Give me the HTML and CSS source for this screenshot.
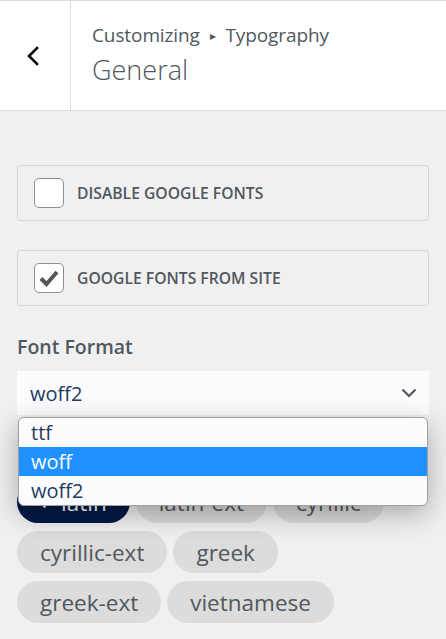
FILE: index.html
```html
<!DOCTYPE html>
<html>
<head>
<meta charset="utf-8">
<link rel="stylesheet" href="styles.css">
</head>
<body>
<header class="header">
  <button class="back" aria-label="Back">
    <svg width="14" height="20" viewBox="0 0 14 20"><path d="M11 2 L3 10 L11 18" fill="none" stroke="#000" stroke-width="2.6" stroke-linecap="square"/></svg>
  </button>
  <div class="titles">
    <div class="crumb">Customizing <span class="tri">&#9656;</span> Typography</div>
    <h1 class="title">General</h1>
  </div>
</header>
<main class="content">
  <label class="check-box">
    <span class="cb"></span>
    <span class="cb-label">DISABLE GOOGLE FONTS</span>
  </label>
  <label class="check-box">
    <span class="cb">
      <svg width="22" height="20" viewBox="0 0 22 20"><path d="M3 10.5 L8.5 16 L19 4" fill="none" stroke="#50575e" stroke-width="4" stroke-linejoin="miter"/></svg>
    </span>
    <span class="cb-label">GOOGLE FONTS FROM SITE</span>
  </label>
  <div class="field">
    <div class="field-label">Font Format</div>
    <div class="select-wrap">
      <div class="select">
        <span>woff2</span>
        <svg width="16" height="10" viewBox="0 0 16 10"><path d="M1.5 1.5 L8 8 L14.5 1.5" fill="none" stroke="#50575e" stroke-width="2.2"/></svg>
      </div>
      <ul class="dropdown">
        <li class="opt">ttf</li>
        <li class="opt active">woff</li>
        <li class="opt">woff2</li>
      </ul>
    </div>
    <div class="pills">
      <span class="pill selected"><svg width="14" height="12" viewBox="0 0 14 12"><path d="M1.5 6 L5.5 10 L12.5 2" fill="none" stroke="#fff" stroke-width="3"/></svg>latin</span>
      <span class="pill">latin-ext</span>
      <span class="pill">cyrillic</span>
      <span class="pill">cyrillic-ext</span>
      <span class="pill">greek</span>
      <span class="pill">greek-ext</span>
      <span class="pill">vietnamese</span>
    </div>
  </div>
</main>
</body>
</html>
```
FILE: styles.css
```css
html, body {
  margin: 0;
  padding: 0;
}
body {
  background: #f0f0f1;
  font-family: "Open Sans", "Noto Sans", sans-serif;
  color: #50575e;
  width: 446px;
  height: 639px;
  overflow: hidden;
}
.header {
  display: flex;
  height: 109px;
  background: #fff;
  border-top: 1px solid #dcdcde;
  border-bottom: 1px solid #dcdcde;
}
.back {
  width: 71px;
  border: 0;
  border-right: 1px solid #dcdcde;
  background: #fff;
  display: flex;
  align-items: center;
  justify-content: center;
  padding: 0 4px 0 0;
  margin: 0;
}
.titles {
  padding: 19px 0 0 21px;
}
.crumb {
  font-size: 19px;
  line-height: 30px;
  color: #50575e;
  letter-spacing: -0.1px;
}
.tri {
  font-size: 12px;
  vertical-align: 2px;
  margin: 0 5px;
}
.title {
  margin: 0;
  font-size: 27px;
  font-weight: 300;
  line-height: 38px;
  color: #50575e;
}
.content {
  padding: 54px 17px 0 17px;
}
.check-box {
  display: flex;
  align-items: center;
  height: 54px;
  border: 1px solid #d6d6d8;
  border-radius: 3px;
  padding-left: 16px;
  margin-bottom: 29px;
}
.cb {
  width: 28px;
  height: 28px;
  border: 1px solid #8c8f94;
  border-radius: 5px;
  background: #fff;
  display: flex;
  align-items: center;
  justify-content: center;
  margin-right: 13px;
  box-sizing: content-box;
}
.cb-label {
  font-size: 15.7px;
  font-weight: 600;
  color: #50575e;
  letter-spacing: 0;
}
.field {
  margin-top: -3px;
}
.field-label {
  font-size: 19.5px;
  font-weight: 600;
  line-height: 30px;
  color: #50575e;
  margin-bottom: 9px;
}
.select-wrap {
  position: relative;
}
.select {
  height: 44px;
  background: #fcfcfe;
  display: flex;
  align-items: center;
  justify-content: space-between;
  padding: 0 12px 0 13px;
  font-size: 20px;
  color: #1e3c5f;
}
.dropdown {
  position: absolute;
  top: 46px;
  left: 1px;
  right: 1px;
  margin: 0;
  padding: 0;
  list-style: none;
  background: #fcfcfe;
  border: 1px solid #a0a0a0;
  border-radius: 6px;
  overflow: hidden;
  box-shadow: 0 8px 28px rgba(0, 0, 0, 0.3);
  z-index: 2;
}
.opt {
  height: 29px;
  line-height: 29px;
  padding-left: 12px;
  font-size: 20px;
  color: #1e3c5f;
}
.opt.active {
  background: #1e90ff;
  color: #fff;
}
.pills {
  display: flex;
  flex-wrap: wrap;
  gap: 8px 6px;
  margin-top: 66px;
  width: 375px;
}
.pill {
  display: inline-flex;
  align-items: center;
  height: 42px;
  padding: 0 23px;
  border-radius: 21px;
  background: #dcdcdc;
  font-size: 22.5px;
  color: #50575e;
}
.pill.selected {
  background: #001a45;
  color: #fff;
  padding-left: 22px;
}
.pill.selected svg {
  margin-right: 8px;
}
```
